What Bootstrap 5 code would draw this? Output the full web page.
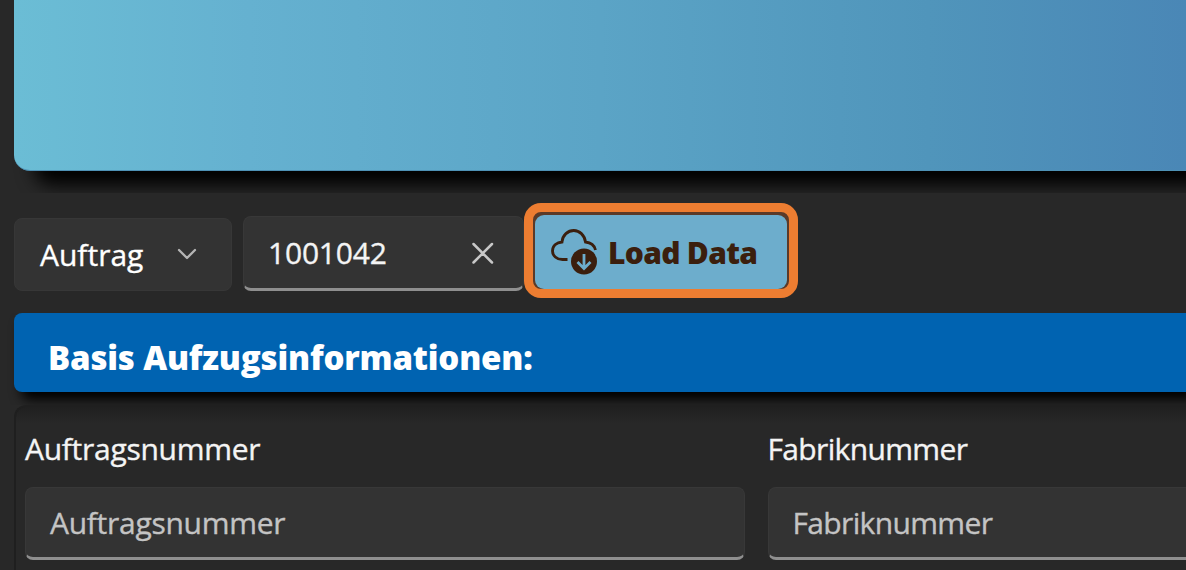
<!DOCTYPE html>
<html lang="de" data-bs-theme="dark">
<head>
<meta charset="utf-8">
<meta name="viewport" content="width=device-width, initial-scale=1">
<title>Basis Aufzugsinformationen</title>
<link href="https://cdn.jsdelivr.net/npm/bootstrap@5.3.0/dist/css/bootstrap.min.css" rel="stylesheet">
<style>
body{background:#282828;color:#f4f4f4;font-family:"Open Sans","Noto Sans",sans-serif;font-size:30px;line-height:40px;height:570px}
.page{padding-left:14px;height:570px}
.hero-wrap{height:193px;margin-left:-14px;padding-left:14px}
.hero{height:171px;border-radius:0 0 0 16px;background:linear-gradient(90deg,#6bbdd5 0%,#65b1d0 20%,#5ba4c6 50%,#5095bb 78%,#4a87b6 100%);border-bottom:1px solid #4e91b5;box-shadow:22px 12px 18px 2px #000}
.tools{height:120px;padding-top:10px}
.pick{width:218px;height:73px;margin-top:15px;padding:0 34px 0 25px;background:#333;border:1px solid #373737;border-radius:8px}
.field{background:#333;border:1px solid #383838;border-bottom:3px solid #8f8f8f;border-radius:8px}
.order{width:281px;height:75px;margin:13px 0 0 11px;padding:0 29px 0 24px}
.mark-ring{width:274px;height:95px;border:9px solid #ed7d31;border-radius:17px;background:#5b3a28;padding:3px 2px 0 2px}
.load{height:74px;width:252px;background:#6dadcc;color:#3b1f0e;border:0;border-radius:9px;padding:0 0 0 16px;font-weight:800}
.bar{height:79px;border-radius:8px 0 0 8px;background:#0063b1;color:#fff;font-weight:800;font-size:33px;padding:11px 0 0 34px;box-shadow:8px 7px 12px 1px #000}
.bar-wrap{height:92px;margin-left:-14px;padding-left:14px}
.panel{height:165px;border:2px solid #1f1f1f;border-right:0;border-bottom:0;border-radius:12px 0 0 0;padding:0 0 0 9px;background:linear-gradient(#202020,#282828 16px)}
.field-col{width:720px;flex:none;margin-right:22.5px}
.inp{height:73px;padding:0 24px;color:#c4c4c4}
.cap{height:80px;padding-top:22px}
.t{white-space:nowrap}
.t-pick,.t-num,.t-lab,.t-fab{-webkit-text-stroke:.35px currentColor}
.t-num{letter-spacing:-.2px}
.t-lab{letter-spacing:-.28px}
.t-fab{letter-spacing:-.65px}
.t-load{margin-left:11px;padding-top:2px;letter-spacing:-.7px}
.t-bar{letter-spacing:-.18px}
</style>
</head>
<body class="overflow-hidden">
<main class="page overflow-hidden">
  <div class="hero-wrap overflow-hidden"><div class="hero"></div></div>
  <div class="tools d-flex align-items-start">
    <button class="pick d-flex align-items-center justify-content-between text-white">
      <span class="t t-pick">Auftrag</span>
      <svg width="20" height="13" viewBox="0 0 20 13" fill="none" stroke="#b5b5b5" stroke-width="2.3" stroke-linecap="round" stroke-linejoin="round"><path d="M2 2l8 8 8-8"/></svg>
    </button>
    <div class="field order d-flex align-items-center justify-content-between">
      <span class="t t-num">1001042</span>
      <svg width="22" height="22" viewBox="0 0 22 22" fill="none" stroke="#c8c8c8" stroke-width="2.5" stroke-linecap="round"><path d="M1.500 2l18.500 18.500M20 2l-18.500 18.500"/></svg>
    </div>
    <div class="mark-ring">
      <button class="load d-flex align-items-center">
        <svg width="46" height="46" viewBox="0 0 46 46" fill="none"><path d="M16.500 30.500H11.500C5.500 30.500 1.500 26.500 1.500 22C1.500 16.500 6 13.500 11 13C11.500 6 17 1.500 22.800 1.500C28.500 1.500 33.500 6 34.500 13C40 13.500 43.500 17 44.500 21" stroke="#3b1f0e" stroke-width="2.800"/><circle cx="33" cy="32.500" r="13" fill="#3b1f0e"/><path d="M33 25v14M26.500 33l6.500 6.500 6.500-6.500" stroke="#6dadcc" stroke-width="2.800"/></svg>
        <span class="t t-load">Load Data</span>
      </button>
    </div>
  </div>
  <div class="bar-wrap overflow-hidden"><div class="bar d-flex align-items-center"><span class="t t-bar">Basis Aufzugsinformationen:</span></div></div>
  <div class="panel d-flex overflow-hidden">
    <div class="field-col"><div class="cap"><span class="t t-lab">Auftragsnummer</span></div><div class="field inp d-flex align-items-center"><span class="t t-lab">Auftragsnummer</span></div></div>
    <div class="field-col"><div class="cap"><span class="t t-fab">Fabriknummer</span></div><div class="field inp d-flex align-items-center"><span class="t t-fab">Fabriknummer</span></div></div>
  </div>
</main>
<script src="https://cdn.jsdelivr.net/npm/bootstrap@5.3.0/dist/js/bootstrap.bundle.min.js"></script>
</body>
</html>
